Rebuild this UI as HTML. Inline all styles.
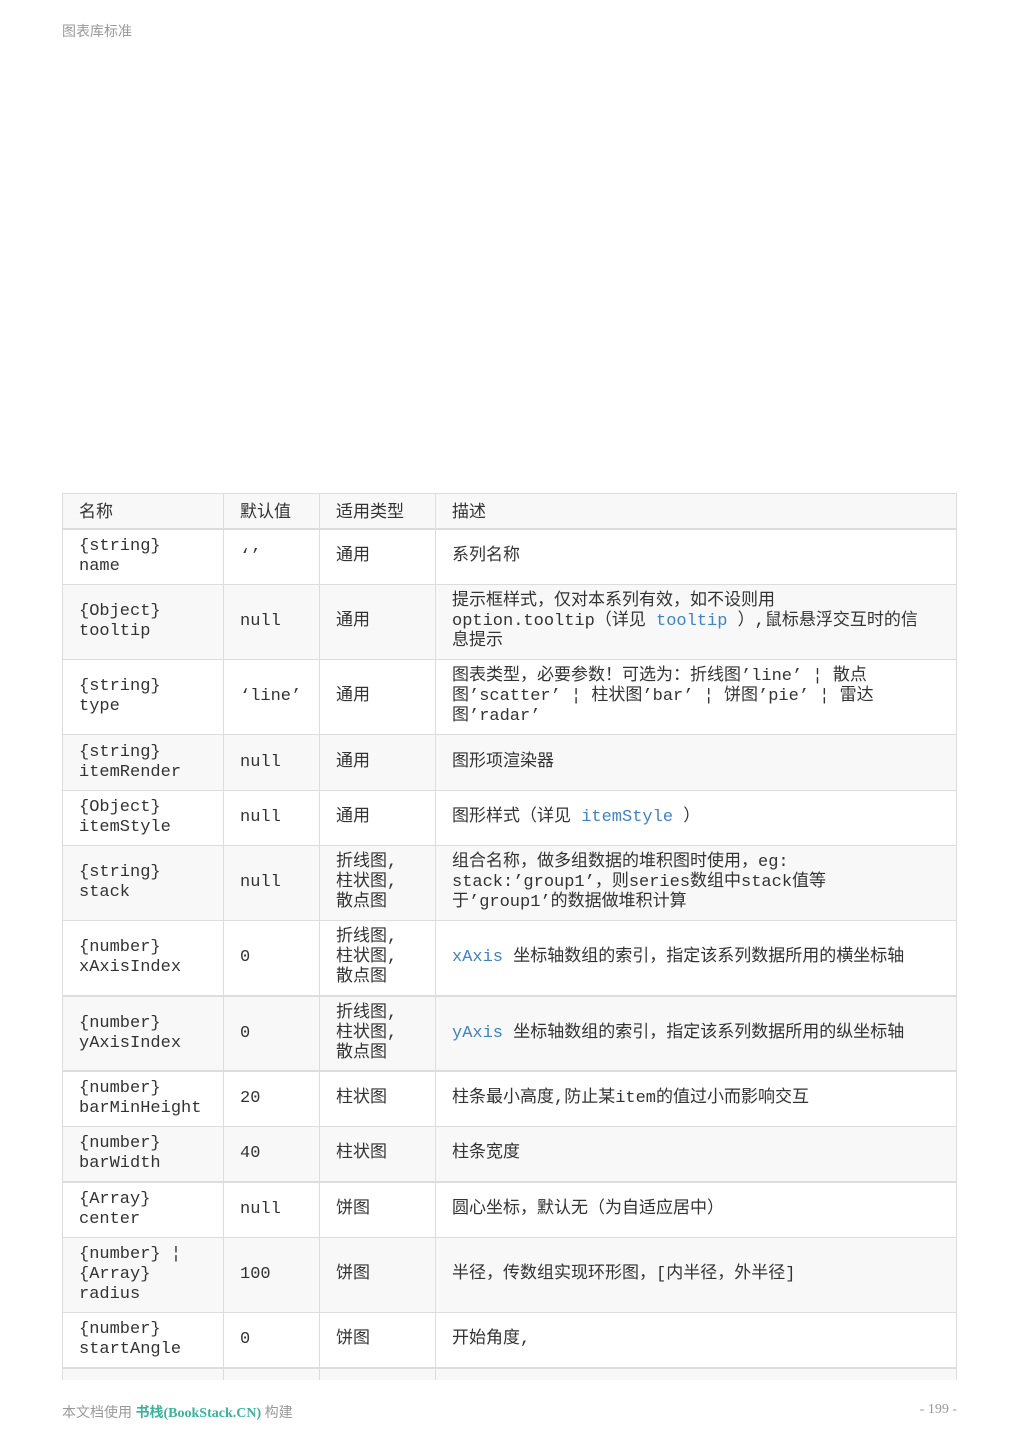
<!DOCTYPE html>
<html><head><meta charset="utf-8"><style>
*{margin:0;padding:0;box-sizing:border-box}
body{width:1019px;height:1440px;background:#fff;position:relative;overflow:hidden;font-family:"Liberation Mono","Noto Sans CJK SC",monospace;color:#333}
.hdr{position:absolute;left:62px;top:21px;font:14px "Liberation Sans","Noto Sans CJK SC",sans-serif;color:#999}
.ftl{position:absolute;left:62px;top:1402px;font:14px "Liberation Serif","Noto Sans CJK SC",serif;color:#999}
.ftl b{color:#3bb39a;font-weight:bold}
.ftr{position:absolute;right:62px;top:1402px;font:14px "Liberation Serif",serif;color:#999}
.tbl{position:absolute;left:62px;top:493px;width:895px;height:887px;overflow:hidden;border-left:1px solid #ddd;border-right:1px solid #ddd}
.row{position:absolute;left:0;width:893px;border-top:1px solid #ddd}
.row.thick{border-top:2px solid #ddd}
.g{background:#f8f8f8}
.c{position:absolute;top:0;bottom:0;display:flex;align-items:center;padding-left:16px;font-size:17px;line-height:20px;white-space:nowrap}
.c1{left:0;width:160px}
.c2{left:160px;width:96px;border-left:1px solid #ddd}
.c3{left:256px;width:116px;border-left:1px solid #ddd}
.c4{left:372px;right:0;border-left:1px solid #ddd}
.h .c{font-family:"Liberation Sans","Noto Sans CJK SC",sans-serif}
a{color:#4183c4;text-decoration:none}
</style></head><body>
<div class="hdr">图表库标准</div>
<div class="tbl">
<div class="row h g" style="top:0;height:36px"><div class="c c1"><div>名称</div></div><div class="c c2"><div>默认值</div></div><div class="c c3"><div>适用类型</div></div><div class="c c4"><div>描述</div></div></div>
<div class="row thick" style="top:35px;height:56px"><div class="c c1"><div>{string}<br>name</div></div><div class="c c2"><div>‘’</div></div><div class="c c3"><div>通用</div></div><div class="c c4"><div>系列名称</div></div></div>
<div class="row g" style="top:91px;height:75px"><div class="c c1"><div>{Object}<br>tooltip</div></div><div class="c c2"><div>null</div></div><div class="c c3"><div>通用</div></div><div class="c c4"><div>提示框样式，仅对本系列有效，如不设则用<br>option.tooltip（详见 <a>tooltip</a> ）,鼠标悬浮交互时的信<br>息提示</div></div></div>
<div class="row" style="top:166px;height:75px"><div class="c c1"><div>{string}<br>type</div></div><div class="c c2"><div>‘line’</div></div><div class="c c3"><div>通用</div></div><div class="c c4"><div>图表类型，必要参数！可选为：折线图’line’ ¦ 散点<br>图’scatter’ ¦ 柱状图’bar’ ¦ 饼图’pie’ ¦ 雷达<br>图’radar’</div></div></div>
<div class="row g" style="top:241px;height:56px"><div class="c c1"><div>{string}<br>itemRender</div></div><div class="c c2"><div>null</div></div><div class="c c3"><div>通用</div></div><div class="c c4"><div>图形项渲染器</div></div></div>
<div class="row" style="top:297px;height:55px"><div class="c c1"><div>{Object}<br>itemStyle</div></div><div class="c c2"><div>null</div></div><div class="c c3"><div>通用</div></div><div class="c c4"><div>图形样式（详见 <a>itemStyle</a> ）</div></div></div>
<div class="row g" style="top:352px;height:75px"><div class="c c1"><div>{string}<br>stack</div></div><div class="c c2"><div>null</div></div><div class="c c3"><div>折线图,<br>柱状图,<br>散点图</div></div><div class="c c4"><div>组合名称，做多组数据的堆积图时使用，eg:<br>stack:’group1’，则series数组中stack值等<br>于’group1’的数据做堆积计算</div></div></div>
<div class="row" style="top:427px;height:75px"><div class="c c1"><div>{number}<br>xAxisIndex</div></div><div class="c c2"><div>0</div></div><div class="c c3"><div>折线图,<br>柱状图,<br>散点图</div></div><div class="c c4"><div><a>xAxis</a> 坐标轴数组的索引，指定该系列数据所用的横坐标轴</div></div></div>
<div class="row g thick" style="top:502px;height:75px"><div class="c c1"><div>{number}<br>yAxisIndex</div></div><div class="c c2"><div>0</div></div><div class="c c3"><div>折线图,<br>柱状图,<br>散点图</div></div><div class="c c4"><div><a>yAxis</a> 坐标轴数组的索引，指定该系列数据所用的纵坐标轴</div></div></div>
<div class="row thick" style="top:577px;height:56px"><div class="c c1"><div>{number}<br>barMinHeight</div></div><div class="c c2"><div>20</div></div><div class="c c3"><div>柱状图</div></div><div class="c c4"><div>柱条最小高度,防止某item的值过小而影响交互</div></div></div>
<div class="row g" style="top:633px;height:55px"><div class="c c1"><div>{number}<br>barWidth</div></div><div class="c c2"><div>40</div></div><div class="c c3"><div>柱状图</div></div><div class="c c4"><div>柱条宽度</div></div></div>
<div class="row thick" style="top:688px;height:56px"><div class="c c1"><div>{Array}<br>center</div></div><div class="c c2"><div>null</div></div><div class="c c3"><div>饼图</div></div><div class="c c4"><div>圆心坐标，默认无（为自适应居中）</div></div></div>
<div class="row g" style="top:744px;height:75px"><div class="c c1"><div>{number} ¦<br>{Array}<br>radius</div></div><div class="c c2"><div>100</div></div><div class="c c3"><div>饼图</div></div><div class="c c4"><div>半径，传数组实现环形图，[内半径，外半径]</div></div></div>
<div class="row" style="top:819px;height:55px"><div class="c c1"><div>{number}<br>startAngle</div></div><div class="c c2"><div>0</div></div><div class="c c3"><div>饼图</div></div><div class="c c4"><div>开始角度,</div></div></div>
<div class="row g thick" style="top:874px;height:40px"><div class="c c1"></div><div class="c c2"></div><div class="c c3"></div><div class="c c4"></div></div>
</div>
<div class="ftl">本文档使用 <b>书栈(BookStack.CN)</b> 构建</div>
<div class="ftr">- 199 -</div>
</body></html>
